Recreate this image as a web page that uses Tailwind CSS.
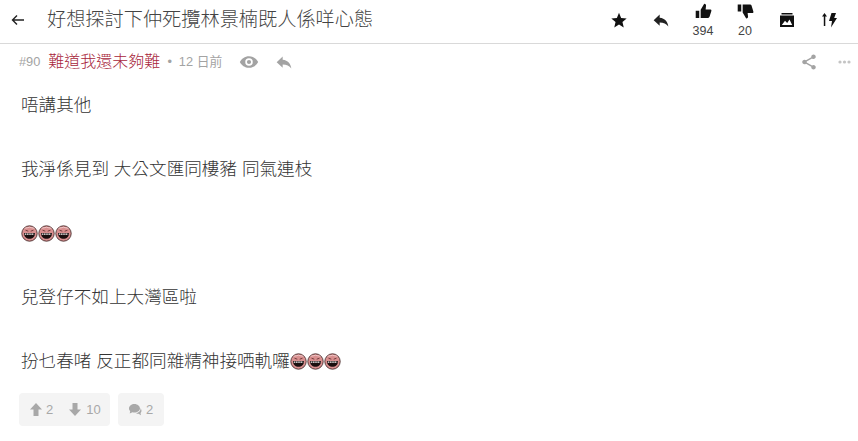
<!DOCTYPE html>
<html lang="zh-Hant">
<head>
    <meta charset="UTF-8">
    <meta name="viewport" content="width=device-width, initial-scale=1.0">
    <title>LIHKG</title>
    <script src="https://cdn.jsdelivr.net/npm/@tailwindcss/browser@4"></script>
</head>
<body class="bg-white overflow-hidden font-['Liberation_Sans','Noto_Sans_CJK_TC',sans-serif]">
    <!-- Top bar -->
    <header class="h-[44px] flex items-center border-b border-[#d9d9d9]">
        <svg class="ml-[11px] w-[13px] h-[12px] -mt-[4px]" viewBox="0 0 13 12" fill="none" stroke="#222" stroke-width="1.400"><path d="M13 6H1.500M6 1.500 1.500 6 6 10.500"/></svg>
        <h1 class="ml-[23px] text-[19.2px] font-light text-[#444] flex-1 -mt-[3px]">好想探討下仲死攬林景楠既人係咩心態</h1>
        <div class="flex pr-[8px] text-[12.500px] text-[#444]">
            <div class="w-[42px] h-[43px] flex justify-center pt-[12px]"><svg class="w-[16px] h-[16px]" viewBox="0 0 24 24" fill="#111"><path d="M12 1l3.200 7.900 8.300.7-6.300 5.400 1.900 8.100L12 18.800 4.900 23.100l1.900-8.100L.5 9.600l8.300-.7z"/></svg></div>
            <div class="w-[42px] h-[43px] flex justify-center pt-[13px]"><svg class="w-[16px] h-[15px]" viewBox="0 0 24 20" fill="#222"><path d="M10 1v5c8 1 12 6 13 13-3-4-7-6-13-6v5L1 9.500z"/></svg></div>
            <div class="w-[42px] h-[43px] flex flex-col items-center pt-[3px]"><svg class="w-[17px] h-[17px]" viewBox="0 0 24 24" fill="#111"><path d="M1 11h5v10H1zM8 21V9.500L13 1c2 0 3 1.500 2.500 3.500L15 9h7c1 0 1.500 1 1 2.500l-2.500 8c-.3 1-1 1.500-2 1.500z"/></svg><span class="leading-[16px] mt-[3px]">394</span></div>
            <div class="w-[42px] h-[43px] flex flex-col items-center pt-[3px]"><svg class="w-[17px] h-[17px]" viewBox="0 0 24 24" fill="#111"><path d="M1 2h5v10H1zM8 2v11.500L13 22c2 0 3-1.500 2.500-3.500L15 14h7c1 0 1.500-1 1-2.500l-2.500-8c-.3-1-1-1.500-2-1.500z"/></svg><span class="leading-[16px] mt-[3px]">20</span></div>
            <div class="w-[42px] h-[43px] flex justify-center pt-[12px]"><svg class="w-[16px] h-[16px]" viewBox="0 0 16 16" fill="#111"><path d="M2.500 1h11v1.500h-11zM1 3.500h14V15H1zM2.800 13h10.400L10.500 7.500 8.200 11 6 8.800z" fill-rule="evenodd"/></svg></div>
            <div class="w-[42px] h-[43px] flex justify-center pt-[12px]"><svg class="w-[15px] h-[16px]" viewBox="0 0 15 16" fill="#111"><path d="M2.500 1 5 4.500H3.300V14H1.800V4.500H0zM9.500 1h4.500l-1.800 5H15l-6 9.500L10 9H7z"/></svg></div>
        </div>
    </header>

    <!-- Post meta -->
    <div class="h-[36px] flex items-center pl-[19px] pr-[7px] text-[12.800px] text-[#a3a3a3]">
        <span>#90</span>
        <span class="ml-[8px] text-[16px] font-light text-[#a8263b]">難道我還未夠難</span>
        <span class="ml-[7px]">•</span>
        <span class="ml-[7px]">12 日前</span>
        <svg class="ml-[17px] w-[20px] h-[20px]" viewBox="0 0 24 24" fill="#a3a3a3"><path d="M12 5C7 5 3 8 1 12c2 4 6 7 11 7s9-3 11-7c-2-4-6-7-11-7zm0 11.500a4.500 4.500 0 1 1 0-9 4.500 4.500 0 0 1 0 9zm0-7a2.500 2.500 0 1 0 0 5 2.500 2.500 0 0 0 0-5z"/></svg>
        <svg class="ml-[17px] w-[16px] h-[15px]" viewBox="0 0 24 20" fill="#a3a3a3"><path d="M10 1v5c8 1 12 6 13 13-3-4-7-6-13-6v5L1 9.500z"/></svg>
        <svg class="ml-auto w-[18px] h-[18px]" viewBox="0 0 24 24" fill="#a3a3a3"><path d="M18 16c-.8 0-1.500.3-2 .8l-7.100-4.200c.1-.2.100-.4.100-.6s0-.4-.1-.6L16 7.200c.5.500 1.200.8 2 .8 1.700 0 3-1.300 3-3s-1.300-3-3-3-3 1.300-3 3c0 .2 0 .4.100.6L8 9.800C7.500 9.300 6.800 9 6 9c-1.700 0-3 1.300-3 3s1.300 3 3 3c.8 0 1.500-.3 2-.8l7.100 4.200c-.1.200-.1.400-.1.600 0 1.700 1.300 3 3 3s3-1.300 3-3-1.300-3-3-3z"/></svg>
        <svg class="ml-[20px] w-[13px] h-[4px]" viewBox="0 0 13 4" fill="#c4c4c4"><circle cx="2" cy="2" r="1.600"/><circle cx="6.500" cy="2" r="1.600"/><circle cx="11" cy="2" r="1.600"/></svg>
    </div>

    <!-- Post body -->
    <div class="pl-[21px] pt-[9px] text-[17.600px] leading-[32px] text-[#333] font-light flex flex-col gap-[32px]">
        <p>唔講其他</p>
        <p>我淨係見到 大公文匯同樓豬 同氣連枝</p>
        <p class="flex items-center h-[32px]">
            <svg class="w-[17px] h-[17px]" viewBox="0 0 17 17"><use href="#laugh"/></svg>
            <svg class="w-[17px] h-[17px]" viewBox="0 0 17 17"><use href="#laugh"/></svg>
            <svg class="w-[17px] h-[17px]" viewBox="0 0 17 17"><use href="#laugh"/></svg>
        </p>
        <p>兒登仔不如上大灣區啦</p>
        <p class="flex items-center">扮乜春啫 反正都同雜精神接哂軌囉<svg class="w-[17px] h-[17px]" viewBox="0 0 17 17"><use href="#laugh"/></svg><svg class="w-[17px] h-[17px]" viewBox="0 0 17 17"><use href="#laugh"/></svg><svg class="w-[17px] h-[17px]" viewBox="0 0 17 17"><use href="#laugh"/></svg></p>
    </div>

    <!-- Vote buttons -->
    <div class="mt-[16px] ml-[19px] flex text-[13px] text-[#a8a8a8] gap-[8px]">
        <div class="h-[33px] w-[91px] rounded-[4px] bg-[#f4f4f4] flex items-center pl-[11px]">
            <svg class="w-[12px] h-[13px]" viewBox="0 0 12 13" fill="#a8a8a8"><path d="M6 0l6 6.500H8.500V13h-5V6.500H0z"/></svg>
            <span class="ml-[4px]">2</span>
            <svg class="ml-[16px] w-[12px] h-[13px]" viewBox="0 0 12 13" fill="#a8a8a8"><path d="M6 13l6-6.500H8.500V0h-5v6.500H0z"/></svg>
            <span class="ml-[5px]">10</span>
        </div>
        <div class="h-[33px] w-[46px] rounded-[4px] bg-[#f4f4f4] flex items-center pl-[11px]">
            <svg class="w-[13px] h-[13px]" viewBox="0 0 13 12" fill="#a8a8a8"><path d="M5.500 .5C2.500 .5 0 2.500 0 5c0 1 .5 2 1.200 2.600L.7 10l2.800-1.300c.6.200 1.300.3 2 .3 3 0 5.500-1.800 5.500-4S8.500 .5 5.500 .5z"/><path d="M11.500 4.500c.5 2.500-1.500 4.800-4.500 5.200.8.400 1.500.5 2.500.5l2.500 1.500-.5-2.300c.6-.5 1-1.200 1-2 0-1-.7-2.400-1-2.900z"/></svg>
            <span class="ml-[4px]">2</span>
        </div>
    </div>

    <!-- Shared emoji -->
    <svg class="hidden">
        <defs>
            <g id="laugh">
                <circle cx="8.500" cy="8.500" r="7.700" fill="#d98f8f" stroke="#4a3030" stroke-width=".9"/>
                <path d="M3.500 3.300q5-2 10 0" stroke="#eec4c4" fill="none"/>
                <path d="M4.500 5.200l2.800 1M12.500 5.200l-2.800 1" stroke="#6a3434" stroke-width=".9" fill="none"/>
                <path d="M3 8h11c.2 3.800-2.500 5.800-5.500 5.800S2.800 11.800 3 8z" fill="#1a0f0f"/>
                <path d="M3.800 9.200h9.400" stroke="#fff" stroke-width="1.200" stroke-dasharray="1.600 .6"/>
            </g>
        </defs>
    </svg>
</body>
</html>
